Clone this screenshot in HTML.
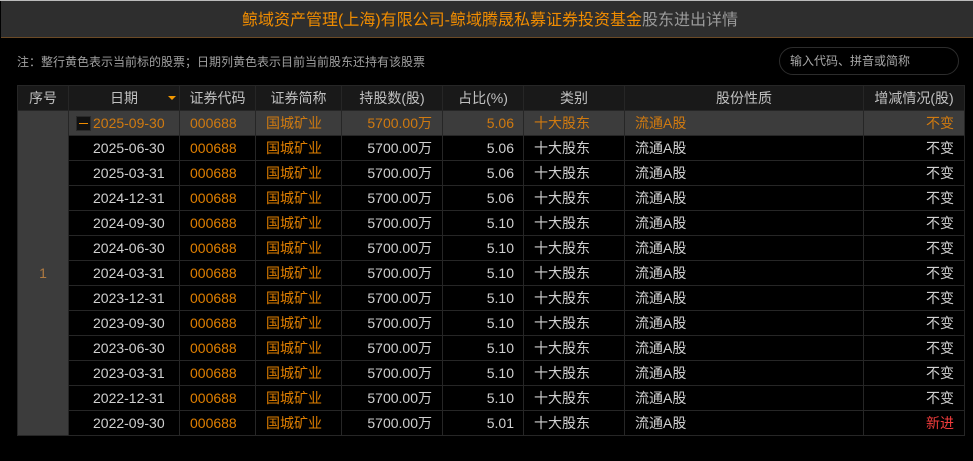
<!DOCTYPE html>
<html><head><meta charset="utf-8">
<style>
html,body{margin:0;padding:0;background:#000;}
body{width:973px;height:461px;overflow:hidden;position:relative;font-family:"Liberation Sans","WenQuanYi Zen Hei","Noto Sans CJK SC",sans-serif;font-size:14px;color:#d0d0d0;}
#top{position:absolute;left:0;top:0;width:973px;height:1px;background:#bbb;}
#title{position:absolute;left:1px;top:1px;width:966px;padding-left:6px;height:36px;background:#2e2e2e;border-bottom:1px solid #6b4a26;text-align:center;line-height:39px;font-size:16px;color:#9a9a9a;white-space:nowrap;}
#title b{font-weight:normal;color:#f08c00;}
#note{position:absolute;left:17px;top:54px;font-size:12px;line-height:16px;color:#a0a0a0;white-space:nowrap;}
#search{position:absolute;left:779px;top:47px;width:178px;height:26px;border:1px solid #2c2c2c;border-radius:14px;font-size:12px;line-height:26px;color:#a8a8a8;text-indent:10px;}
table{position:absolute;left:17px;top:85px;border-collapse:collapse;table-layout:fixed;width:948px;}
td,th{border:1px solid #262626;padding:0;height:24px;line-height:24px;font-weight:normal;white-space:nowrap;overflow:hidden;box-sizing:content-box;}
th{background:#191919;color:#c0c0c0;font-size:14px;text-align:center;}
td{background:#000;}
.s{background:#3c3c3c!important;color:#d07a10!important;}
.o{color:#e07f00;}
.c{text-align:left;padding-left:10px;}
.n{background:#3c3c3c;color:#b07a40;text-align:center;}
.d{text-align:left;padding-left:24px;}
.ac{padding-left:10px;text-align:left;}
.sh{padding-right:10px;text-align:right;}
.pc{padding-right:9px;text-align:right;}
.ch{padding-right:10px;text-align:right;}
.red{color:#f23c3c;}
#exp{position:absolute;left:76px;top:116px;width:13px;height:13px;background:#111;border:1px solid #2a2a2a;}
#exp i{position:absolute;left:2px;top:6px;width:9px;height:1px;background:#f08c00;}
#arr{position:absolute;left:168px;top:96px;width:0;height:0;border-left:4px solid transparent;border-right:4px solid transparent;border-top:4px solid #f39800;}
</style></head><body>
<div id="top"></div>
<div id="title"><b>鲸域资产管理(上海)有限公司-鲸域腾晟私募证券投资基金</b>股东进出详情</div>
<div id="note">注：整行黄色表示当前标的股票；日期列黄色表示目前当前股东还持有该股票</div>
<div id="search">输入代码、拼音或简称</div>
<table>
<colgroup><col style="width:51px"><col style="width:111px"><col style="width:76px"><col style="width:86px"><col style="width:101px"><col style="width:81px"><col style="width:101px"><col style="width:239px"><col style="width:101px"></colgroup>
<tr><th>序号</th><th>日期</th><th>证券代码</th><th>证券简称</th><th>持股数(股)</th><th>占比(%)</th><th>类别</th><th>股份性质</th><th>增减情况(股)</th></tr>
<tr><td class="n" rowspan="13">1</td><td class="d s">2025-09-30</td><td class="c s">000688</td><td class="c s">国城矿业</td><td class="sh s">5700.00万</td><td class="pc s">5.06</td><td class="c s">十大股东</td><td class="ac s">流通A股</td><td class="ch s">不变</td></tr>
<tr><td class="d">2025-06-30</td><td class="c o">000688</td><td class="c o">国城矿业</td><td class="sh">5700.00万</td><td class="pc">5.06</td><td class="c">十大股东</td><td class="ac">流通A股</td><td class="ch">不变</td></tr>
<tr><td class="d">2025-03-31</td><td class="c o">000688</td><td class="c o">国城矿业</td><td class="sh">5700.00万</td><td class="pc">5.06</td><td class="c">十大股东</td><td class="ac">流通A股</td><td class="ch">不变</td></tr>
<tr><td class="d">2024-12-31</td><td class="c o">000688</td><td class="c o">国城矿业</td><td class="sh">5700.00万</td><td class="pc">5.06</td><td class="c">十大股东</td><td class="ac">流通A股</td><td class="ch">不变</td></tr>
<tr><td class="d">2024-09-30</td><td class="c o">000688</td><td class="c o">国城矿业</td><td class="sh">5700.00万</td><td class="pc">5.10</td><td class="c">十大股东</td><td class="ac">流通A股</td><td class="ch">不变</td></tr>
<tr><td class="d">2024-06-30</td><td class="c o">000688</td><td class="c o">国城矿业</td><td class="sh">5700.00万</td><td class="pc">5.10</td><td class="c">十大股东</td><td class="ac">流通A股</td><td class="ch">不变</td></tr>
<tr><td class="d">2024-03-31</td><td class="c o">000688</td><td class="c o">国城矿业</td><td class="sh">5700.00万</td><td class="pc">5.10</td><td class="c">十大股东</td><td class="ac">流通A股</td><td class="ch">不变</td></tr>
<tr><td class="d">2023-12-31</td><td class="c o">000688</td><td class="c o">国城矿业</td><td class="sh">5700.00万</td><td class="pc">5.10</td><td class="c">十大股东</td><td class="ac">流通A股</td><td class="ch">不变</td></tr>
<tr><td class="d">2023-09-30</td><td class="c o">000688</td><td class="c o">国城矿业</td><td class="sh">5700.00万</td><td class="pc">5.10</td><td class="c">十大股东</td><td class="ac">流通A股</td><td class="ch">不变</td></tr>
<tr><td class="d">2023-06-30</td><td class="c o">000688</td><td class="c o">国城矿业</td><td class="sh">5700.00万</td><td class="pc">5.10</td><td class="c">十大股东</td><td class="ac">流通A股</td><td class="ch">不变</td></tr>
<tr><td class="d">2023-03-31</td><td class="c o">000688</td><td class="c o">国城矿业</td><td class="sh">5700.00万</td><td class="pc">5.10</td><td class="c">十大股东</td><td class="ac">流通A股</td><td class="ch">不变</td></tr>
<tr><td class="d">2022-12-31</td><td class="c o">000688</td><td class="c o">国城矿业</td><td class="sh">5700.00万</td><td class="pc">5.10</td><td class="c">十大股东</td><td class="ac">流通A股</td><td class="ch">不变</td></tr>
<tr><td class="d">2022-09-30</td><td class="c o">000688</td><td class="c o">国城矿业</td><td class="sh">5700.00万</td><td class="pc">5.01</td><td class="c">十大股东</td><td class="ac">流通A股</td><td class="ch red">新进</td></tr>
</table>
<div id="exp"><i></i></div>
<div id="arr"></div>
</body></html>
